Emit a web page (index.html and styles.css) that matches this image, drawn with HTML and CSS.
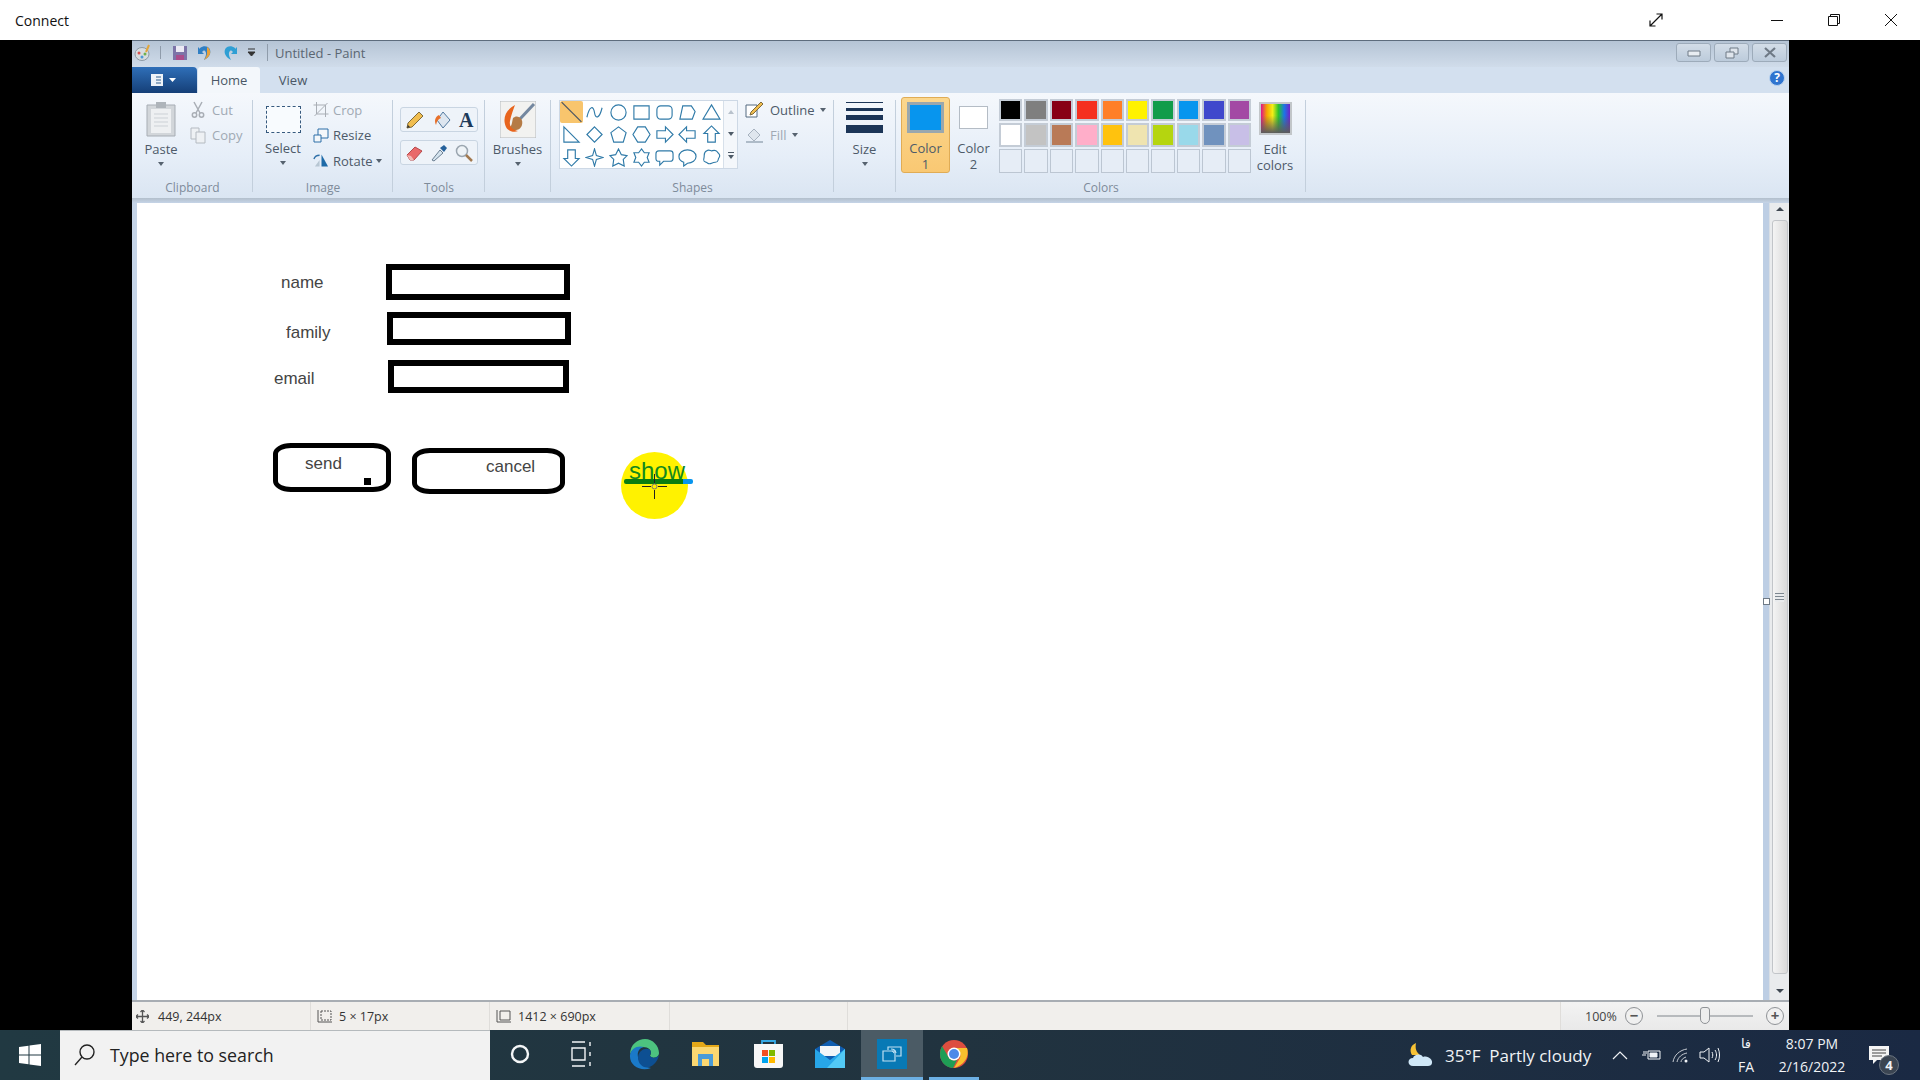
FILE: index.html
```html
<!DOCTYPE html>
<html lang="en">
<head>
<meta charset="UTF-8">
<meta name="viewport" content="width=device-width, initial-scale=1.0">
<title>Connect</title>
<link rel="stylesheet" href="styles.css">
</head>
<body>
<div class="connect-bar">
  <span class="connect-title">Connect</span>
  <svg class="connect-expand" width="16" height="16" viewBox="0 0 16 16" fill="none" stroke="#111" stroke-width="1.2"><path d="M2 14 14 2M8.5 2H14V7.5M2 8.5V14H7.5"/></svg>
  <svg class="connect-btn" width="14" height="14" viewBox="0 0 14 14" fill="none" stroke="#111"><path d="M1 7.5H13"/></svg>
  <svg class="connect-btn" width="14" height="14" viewBox="0 0 14 14" fill="none" stroke="#111"><path d="M1.5 3.5H10.5V12.5H1.5ZM3.5 3.5V1.5H12.5V10.5H10.5"/></svg>
  <svg class="connect-btn" width="14" height="14" viewBox="0 0 14 14" fill="none" stroke="#111"><path d="M1 1 13 13M13 1 1 13"/></svg>
</div>

<div class="stage">
  <div class="paint">
    <div class="title-row">
      <svg class="qa-icon first" width="18" height="18" viewBox="0 0 18 18"><ellipse cx="8" cy="10" rx="7" ry="6.5" fill="#d8dde0" stroke="#8d9aa5"/><circle cx="5" cy="9" r="1.5" fill="#d9534f"/><circle cx="8" cy="13" r="1.5" fill="#4c9ad6"/><circle cx="11" cy="10" r="1.5" fill="#6fb04f"/><path d="M12 8 15 1" stroke="#e2a63a" stroke-width="2"/></svg>
      <span class="qa-sep"></span>
      <svg class="qa-icon" width="16" height="16" viewBox="0 0 16 16"><path d="M1 1H15V15H1Z" fill="#7d74a8"/><path d="M4 1H12V7H4Z" fill="#eceaf4"/><path d="M4 10H12V15H4Z" fill="#ab4d8c"/></svg>
      <svg class="qa-icon" width="16" height="17" viewBox="0 0 16 17" fill="none"><path d="M3 4C8 0 15 3 13 10 12 13 9 15 7 16 9 12 10 9 8 7 7 6 6 7 5 8L7 10H1V3L3 5" fill="#2f7fc4"/><path d="M10 3C12 4 14 7 13 10 12 13 9 15 7 16 9 13 10 11 10 9Z" fill="#e9a13b"/></svg>
      <svg class="qa-icon" width="16" height="17" viewBox="0 0 16 17" fill="none"><path d="M13 4C8 0 1 3 3 10 4 13 7 15 9 16 7 12 6 9 8 7 9 6 10 7 11 8L9 10H15V3L13 5" fill="#2f9fd4"/></svg>
      <svg class="qa-icon" width="9" height="9" viewBox="0 0 9 9"><path d="M1 1H8M1 4H8L4.5 8Z" stroke="#333" fill="#333"/></svg>
      <span class="qa-sep tall"></span>
      <span class="window-title">Untitled - Paint</span>
      <div class="win-buttons">
        <div class="win-button"><svg width="14" height="8" viewBox="0 0 14 8"><path d="M1 2H13V7H1Z" fill="#e8edf2" stroke="#6f7a86"/></svg></div>
        <div class="win-button"><svg width="14" height="12" viewBox="0 0 14 12" fill="#dfe5ec" stroke="#6f7a86"><path d="M5 1H13V7H5Z"/><path d="M1 5H9V11H1Z"/></svg></div>
        <div class="win-button"><svg width="14" height="11" viewBox="0 0 14 11" fill="none" stroke="#6f7a86" stroke-width="2.2"><path d="M2 1 12 10M12 1 2 10"/></svg></div>
      </div>
    </div>

    <div class="tab-row">
      <div class="app-menu">
        <svg width="14" height="12" viewBox="0 0 14 12"><path d="M1 0H13V12H1Z" fill="#eef3f8"/><path d="M6 3H11M6 6H11M6 9H11" stroke="#32618f"/></svg>
        <svg width="7" height="4" viewBox="0 0 7 4"><path d="M0 0H7L3.5 4Z" fill="#fff"/></svg>
      </div>
      <div class="tab active">Home</div>
      <div class="tab">View</div>
      <svg class="help" width="16" height="16" viewBox="0 0 16 16"><circle cx="8" cy="8" r="7.5" fill="#2f74cf" stroke="#b9d2ef"/><text x="8" y="12" text-anchor="middle" class="help-mark">?</text></svg>
    </div>

    <div class="ribbon">
      <section class="group clipboard">
        <div class="group-body">
          <div class="big-btn paste">
            <svg width="30" height="36" viewBox="0 0 30 36"><path d="M1 4H29V35H1Z" fill="#d2d6da" stroke="#a7adb4"/><path d="M5 8H25V32H5Z" fill="#eef0f2"/><path d="M10 1H20V7H10Z" fill="#aeb4ba"/><path d="M8 13H22M8 17H22M8 21H22M8 25H22" stroke="#ccd1d6"/></svg>
            <span>Paste</span><i class="caret"></i>
          </div>
          <div class="small-col">
            <div class="small-btn dim"><svg width="16" height="17" viewBox="0 0 14 17" fill="none" stroke="#a9aeb5" stroke-width="1.5"><path d="M3 1 9 12M11 1 5 12"/><circle cx="3.5" cy="14" r="2.2"/><circle cx="10.5" cy="14" r="2.2"/></svg><span>Cut</span></div>
            <div class="small-btn dim"><svg width="16" height="17" viewBox="0 0 16 17" fill="#eef1f4" stroke="#b4bac1"><path d="M1 1H9V12H1Z"/><path d="M6 5H15V16H6Z"/></svg><span>Copy</span></div>
          </div>
        </div>
        <div class="group-label">Clipboard</div>
      </section>

      <section class="group image">
        <div class="group-body">
          <div class="big-btn select">
            <div class="select-box"></div>
            <span>Select</span><i class="caret"></i>
          </div>
          <div class="small-col">
            <div class="small-btn dim"><svg width="16" height="15" viewBox="0 0 15 15" fill="none" stroke="#a9aeb5"><path d="M3 0V12H15M0 3H12V15M1 14 14 1"/></svg><span>Crop</span></div>
            <div class="small-btn"><svg width="16" height="15" viewBox="0 0 16 15" fill="#f4f7fa" stroke="#2d6fa8"><path d="M5 1H15V10H5Z"/><path d="M1 7H8V14H1Z"/></svg><span>Resize</span></div>
            <div class="small-btn"><svg width="16" height="15" viewBox="0 0 17 15"><path d="M9 14V1L16 14Z" fill="#1d6aa8"/><path d="M7 14V7L2 14Z" fill="#b7c6d3"/><path d="M1 6C2 3 4 2 7 2" stroke="#2d6fa8" fill="none" stroke-width="1.5"/></svg><span>Rotate</span><i class="caret inline"></i></div>
          </div>
        </div>
        <div class="group-label">Image</div>
      </section>

      <section class="group tools">
        <div class="group-body">
          <div class="tool-grid">
            <div class="tool-row">
              <svg width="20" height="20" viewBox="0 0 20 20"><path d="M14 2 18 6 7 17 2 18 3 13Z" fill="#f0bd4f" stroke="#7d6a3b"/><path d="M2 18 3 15 5 17Z" fill="#333"/></svg>
              <svg width="20" height="20" viewBox="0 0 20 20"><path d="M11 2 18 10 11 18 5 10Z" fill="#dde6f0" stroke="#52799f"/><path d="M7 5C3 7 2 11 4 15 5 11 6 9 9 8Z" fill="#e8702a"/></svg>
              <span class="tool-a">A</span>
            </div>
            <div class="tool-row">
              <svg width="20" height="20" viewBox="0 0 20 20"><path d="M3 12 11 4 18 8 10 17H6Z" fill="#e9696a" stroke="#b64a4c"/><path d="M3 12 6 17H10L7 13Z" fill="#f4b9b4"/></svg>
              <svg width="20" height="20" viewBox="0 0 20 20"><path d="M3 17 11 7 14 10 5 18Z" fill="#d5e4ef" stroke="#6b7f92"/><path d="M11 5 15 2 18 5 15 9Z" fill="#25619b"/></svg>
              <svg width="20" height="20" viewBox="0 0 20 20" fill="none"><circle cx="8" cy="8" r="5.5" stroke="#9ba6b0" stroke-width="1.5" fill="#eef3f7"/><path d="M12 12 18 18" stroke="#a2794f" stroke-width="2.5"/></svg>
            </div>
          </div>
        </div>
        <div class="group-label">Tools</div>
      </section>

      <section class="group brushes">
        <div class="group-body">
          <div class="big-btn brush">
            <svg width="36" height="37" viewBox="0 0 36 37"><path d="M0 0H36V37H0Z" fill="#f2f2f0" stroke="#b4b9bd"/><path d="M34 3 19 19" stroke="#7488a0" stroke-width="3"/><path d="M13 17C17 13 24 17 22 24 20 31 11 30 9 26 12 26 12 21 13 17Z" fill="#b57b45"/><path d="M15 4C6 9 2 17 6 26 8 30 14 32 18 30 12 29 9 25 10 20 11 15 13 9 15 4Z" fill="#e8651d"/></svg>
            <span>Brushes</span><i class="caret"></i>
          </div>
        </div>
        <div class="group-label">&nbsp;</div>
      </section>

      <section class="group shapes">
        <div class="group-body">
          <div class="gallery">
            <div class="gallery-grid">
              <svg class="picked" viewBox="0 0 20 20"><path d="M1 1 19 19"/></svg>
              <svg viewBox="0 0 20 20"><path d="M2 15C5 2 9 3 10 10S15 17 18 5"/></svg>
              <svg viewBox="0 0 20 20"><circle cx="10" cy="10" r="8"/></svg>
              <svg viewBox="0 0 20 20"><path d="M2 3H18V17H2Z"/></svg>
              <svg viewBox="0 0 20 20"><rect x="2" y="3" width="16" height="14" rx="4"/></svg>
              <svg viewBox="0 0 20 20"><path d="M2 17 5 3H14L18 9 15 17Z"/></svg>
              <svg viewBox="0 0 20 20"><path d="M10 2 19 17H1Z"/></svg>
              <svg viewBox="0 0 20 20"><path d="M2 2 18 18H2Z"/></svg>
              <svg viewBox="0 0 20 20"><path d="M10 2 18 10 10 18 2 10Z"/></svg>
              <svg viewBox="0 0 20 20"><path d="M10 2 18 8 15 18H5L2 8Z"/></svg>
              <svg viewBox="0 0 20 20"><path d="M6 2H14L19 10 14 18H6L1 10Z"/></svg>
              <svg viewBox="0 0 20 20"><path d="M2 6H11V2L19 10 11 18V14H2Z"/></svg>
              <svg viewBox="0 0 20 20"><path d="M18 6H9V2L1 10 9 18V14H18Z"/></svg>
              <svg viewBox="0 0 20 20"><path d="M6 18V9H2L10 1 18 9H14V18Z"/></svg>
              <svg viewBox="0 0 20 20"><path d="M6 2V11H2L10 19 18 11H14V2Z"/></svg>
              <svg viewBox="0 0 20 20"><path d="M10 1 12 8 19 10 12 12 10 19 8 12 1 10 8 8Z"/></svg>
              <svg viewBox="0 0 20 20"><path d="M10 1 13 7 19 8 15 12 16 19 10 16 4 19 5 12 1 8 7 7Z"/></svg>
              <svg viewBox="0 0 20 20"><path d="M10 1 13 5H18L16 10 18 15H13L10 19 7 15H2L4 10 2 5H7Z"/></svg>
              <svg viewBox="0 0 20 20"><path d="M4 3H16Q19 3 19 6V11Q19 14 16 14H9L5 18V14H4Q1 14 1 11V6Q1 3 4 3Z"/></svg>
              <svg viewBox="0 0 20 20"><path d="M10 2C15 2 19 5 19 9S15 16 10 16L6 19V15C3 14 1 12 1 9 1 5 5 2 10 2Z"/></svg>
              <svg viewBox="0 0 20 20"><path d="M5 3C7 1 9 3 10 3S14 1 16 4 20 7 18 10 18 15 14 15 9 18 6 16 1 15 2 11 1 5 5 3Z"/></svg>
            </div>
            <div class="gallery-arrows">
              <i class="arrow-up"></i><i class="arrow-down"></i><i class="arrow-more"></i>
            </div>
          </div>
          <div class="small-col shape-opts">
            <div class="small-btn"><svg width="19" height="17" viewBox="0 0 19 17"><path d="M1 4H12V16H1Z" fill="#fff" stroke="#556b80"/><path d="M16 1 18 3 8 13 5 14 6 11Z" fill="#f0bd4f" stroke="#7d6a3b"/></svg><span>Outline</span><i class="caret inline"></i></div>
            <div class="small-btn dim"><svg width="19" height="17" viewBox="0 0 19 17"><path d="M9 2 15 8 9 14 3 8Z" fill="#dfe6ee" stroke="#a7b2bf"/><path d="M1 15H18" stroke="#aebbc8" stroke-width="2"/></svg><span>Fill</span><i class="caret inline"></i></div>
          </div>
        </div>
        <div class="group-label">Shapes</div>
      </section>

      <section class="group size">
        <div class="group-body">
          <div class="big-btn size-btn">
            <div class="size-lines"><i></i><i></i><i></i><i></i></div>
            <span>Size</span><i class="caret"></i>
          </div>
        </div>
        <div class="group-label">&nbsp;</div>
      </section>

      <section class="group colors">
        <div class="group-body">
          <div class="color-pick active"><div class="color-well"><b class="well-blue"></b></div><span>Color<br>1</span></div>
          <div class="color-pick second"><div class="color-well small"><b></b></div><span>Color<br>2</span></div>
          <div class="palette">
            <i class="c-black"></i><i class="c-gray"></i><i class="c-maroon"></i><i class="c-red"></i><i class="c-orange"></i><i class="c-yellow"></i><i class="c-green"></i><i class="c-blue"></i><i class="c-indigo"></i><i class="c-purple"></i>
            <i class="c-white"></i><i class="c-silver"></i><i class="c-brown"></i><i class="c-pink"></i><i class="c-gold"></i><i class="c-cream"></i><i class="c-lime"></i><i class="c-sky"></i><i class="c-steel"></i><i class="c-lilac"></i>
            <i class="c-empty"></i><i class="c-empty"></i><i class="c-empty"></i><i class="c-empty"></i><i class="c-empty"></i><i class="c-empty"></i><i class="c-empty"></i><i class="c-empty"></i><i class="c-empty"></i><i class="c-empty"></i>
          </div>
          <div class="edit-colors"><div class="rainbow"></div><span>Edit<br>colors</span></div>
        </div>
        <div class="group-label">Colors</div>
      </section>
    </div>
    <div class="ribbon-edge"></div>

    <div class="workspace">
      <div class="canvas">
        <div class="field field-name"></div>
        <div class="field field-family"></div>
        <div class="field field-email"></div>
        <div class="pill pill-send"></div>
        <div class="pill pill-cancel"></div>
        <div class="dot"></div>
        <div class="sun"></div>
        <span class="label l-name">name</span>
        <span class="label l-family">family</span>
        <span class="label l-email">email</span>
        <span class="label l-send">send</span>
        <span class="label l-cancel">cancel</span>
        <span class="show">show</span>
        <div class="underline"></div>
        <svg class="cross" width="25" height="25" viewBox="0 0 25 25" fill="none" stroke="#222"><path d="M0 12.5H9M16 12.5H25M12.5 0V9M12.5 16V25"/><circle cx="12.5" cy="12.5" r="2.5" stroke="#777"/></svg>
      </div>
      <div class="gutter"><div class="handle"></div></div>
      <div class="vscroll">
        <i class="scroll-up"></i>
        <div class="scroll-thumb"><div class="grip"></div></div>
        <i class="scroll-down"></i>
      </div>
    </div>

    <div class="statusbar">
      <div class="status-cell w-pos"><svg width="13" height="13" viewBox="0 0 13 13" fill="none" stroke="#555" stroke-width="1.3"><path d="M6.5 0V13M0 6.5H13"/><path d="M4.5 2 6.5 0 8.5 2M4.5 11 6.5 13 8.5 11M2 4.5 0 6.5 2 8.5M11 4.5 13 6.5 11 8.5"/></svg><span>449, 244px</span></div>
      <div class="status-cell w-sel"><svg width="16" height="15" viewBox="0 0 16 15" fill="none" stroke="#555"><path d="M4 2H14V11H4Z" stroke-dasharray="2 1"/><path d="M1 1V13H15"/></svg><span>5 × 17px</span></div>
      <div class="status-cell w-size"><svg width="16" height="15" viewBox="0 0 16 15" fill="none" stroke="#555"><path d="M4 2H14V11H4Z"/><path d="M1 1V13H15"/></svg><span>1412 × 690px</span></div>
      <div class="status-cell w-a"></div>
      <div class="status-cell w-b"></div>
      <div class="zoom-box">
        <span class="zoom-val">100%</span>
        <div class="zoom-round">−</div>
        <div class="zoom-track"><div class="zoom-thumb"></div></div>
        <div class="zoom-round">+</div>
      </div>
    </div>
  </div>
</div>

<div class="taskbar">
  <div class="start">
    <svg width="22" height="22" viewBox="0 0 22 22" fill="#fff"><path d="M0 3 9.5 1.7V10.5H0ZM10.5 1.5 22 0V10.5H10.5ZM0 11.5H9.5V20.3L0 19ZM10.5 11.5H22V22L10.5 20.5Z"/></svg>
  </div>
  <div class="searchbox">
    <svg width="24" height="24" viewBox="0 0 24 24" fill="none" stroke="#222" stroke-width="1.4"><circle cx="14" cy="9" r="7"/><path d="M9 14 2 22"/></svg>
    <span>Type here to search</span>
  </div>
  <div class="task-icons">
    <div class="task-slot"><svg width="20" height="20" viewBox="0 0 20 20" fill="none" stroke="#f4f6f7" stroke-width="2.4"><circle cx="10" cy="10" r="8"/></svg></div>
    <div class="task-slot"><svg width="22" height="26" viewBox="0 0 22 26" fill="none" stroke="#f4f6f7" stroke-width="1.4"><path d="M1 1H14M1 25H14M1 7H14V19H1ZM19 1V5M19 11V15M19 21V25"/></svg></div>
    <div class="task-slot"><svg width="32" height="32" viewBox="0 0 32 32"><path d="M2 17C2 6 10 1 17 1 25 1 31 8 31 15 31 20 24 21 22 18 25 12 20 9 15 9 8 9 3 12 2 17Z" fill="#4dc37f"/><path d="M2 17C3 10 10 7 16 9 11 10 9 14 10 19 11 25 16 29 23 30 13 34 1 28 2 17Z" fill="#1a79c8"/><path d="M10 19C11 12 18 9 22 12 24 15 21 18 22 18 25 21 29 20 31 17 29 26 22 31 16 29 12 27 10 24 10 19Z" fill="#0d4f92"/></svg></div>
    <div class="task-slot"><svg width="28" height="26" viewBox="0 0 28 26"><path d="M0 1H11L14 4H27V25H0Z" fill="#e5a818"/><path d="M0 6H27V25H0Z" fill="#fbd771"/><path d="M6 25V13H21V25H17V18H10V25Z" fill="#4a9bd8"/></svg></div>
    <div class="task-slot"><svg width="29" height="30" viewBox="0 0 29 30"><path d="M8 6V2H21V6" fill="none" stroke="#35a9e6" stroke-width="1.8"/><path d="M0 5H29V26Q29 29 26 29H3Q0 29 0 26Z" fill="#f7f7f7"/><path d="M8 11H14V17H8Z" fill="#f25022"/><path d="M15 11H21V17H15Z" fill="#7fba00"/><path d="M8 18H14V24H8Z" fill="#00a4ef"/><path d="M15 18H21V24H15Z" fill="#ffb900"/></svg></div>
    <div class="task-slot"><svg width="30" height="28" viewBox="0 0 30 28"><path d="M0 9 15 0 30 9V28H0Z" fill="#0f5db0"/><path d="M5 6H25V16H5Z" fill="#f1f5f8"/><path d="M0 9 15 20 30 9V28H0Z" fill="#27a6e8"/><path d="M30 9V28H12Z" fill="#52c9f5"/></svg></div>
    <div class="task-slot open current"><div class="rdp"><svg width="20" height="16" viewBox="0 0 20 16" fill="none" stroke="#bfe0f2" stroke-width="1.2"><path d="M6 4V1H19V10H14"/><path d="M1 5H13V15H1Z"/><path d="M9 3A5 5 0 0 1 14 7M10 5A3 3 0 0 1 12 7"/></svg></div></div>
    <div class="task-slot open"><svg width="28" height="28" viewBox="0 0 28 28"><circle cx="14" cy="14" r="14" fill="#dd4e3f"/><path d="M14 28C6 28 0 22 0 14 0 11 1 8 2 6L9 18C11 20 13 21 17 20L13 28Z" fill="#1f9d55"/><path d="M14 8H27C29 14 27 24 14 28L20 18C21 14 20 10 14 8Z" fill="#f9c02d"/><circle cx="14" cy="14" r="6.5" fill="#fff"/><circle cx="14" cy="14" r="5" fill="#4e89e8"/></svg></div>
  </div>
  <div class="tray">
    <svg class="weather" width="28" height="26" viewBox="0 0 28 26"><path d="M10 1C5 3 3 8 6 13H14C10 10 9 6 10 1Z" fill="#f7c235"/><path d="M7 24C1 24 1 16 7 16 8 12 15 11 17 15 22 13 27 18 26 21 26 23 24 24 22 24Z" fill="#cfe7f7"/></svg>
    <span class="weather-text">35°F&nbsp; Partly cloudy</span>
    <svg class="tray-icon chevron" width="16" height="9" viewBox="0 0 16 9" fill="none" stroke="#f0f3f6" stroke-width="1.2"><path d="M1 8 8 1 15 8"/></svg>
    <svg class="tray-icon" width="20" height="14" viewBox="0 0 20 14" fill="none" stroke="#f0f3f6"><path d="M6 3H18V11H6Z"/><path d="M8 5H15V9H8Z" fill="#f0f3f6"/><path d="M0 7H4M2 3V6M4 3V6"/></svg>
    <svg class="tray-icon" width="17" height="15" viewBox="0 0 17 15" fill="none" stroke="#c7ccd2"><path d="M1 14C2 7 8 2 15 1M5 14C6 9 10 6 15 5M9 14C9 12 11 10 14 9"/><circle cx="14" cy="13" r="1.5" fill="#f0f3f6" stroke="none"/></svg>
    <svg class="tray-icon" width="21" height="16" viewBox="0 0 21 16" fill="none" stroke="#f0f3f6"><path d="M1 5H5L10 1V15L5 11H1Z"/><path d="M13 5C14 7 14 9 13 11M16 3C18 6 18 10 16 13M19 1C21 5 21 11 19 15"/></svg>
    <div class="lang"><span class="lang-ar">فا</span><span>FA</span></div>
    <div class="clock"><span>8:07 PM</span><span>2/16/2022</span></div>
    <div class="notify">
      <svg width="20" height="18" viewBox="0 0 20 18"><path d="M0 0H20V14H8L4 18V14H0Z" fill="#f4f4f4"/><path d="M3 4H17M3 7H17M3 10H13" stroke="#444"/></svg>
      <span class="badge">4</span>
    </div>
  </div>
</div>
</body>
</html>
```

FILE: styles.css
```css
/* page frame */
body {
  margin: 0;
  width: 1920px;
  height: 1080px;
  overflow: hidden;
  display: flex;
  flex-direction: column;
  background-color: #000;
  font-family: 'Open Sans', 'Liberation Sans', sans-serif;
  color: #4d5a69;
}

.connect-bar {
  height: 40px;
  background-color: #fff;
  display: flex;
  align-items: center;
  color: #111;
}

.connect-title {
  margin-left: 15px;
  font-size: 14px;
  flex: 1;
}

.connect-expand {
  margin-right: 106px;
}

.connect-btn {
  margin-right: 43px;
}

.connect-btn:last-child {
  margin-right: 22px;
}

.stage {
  height: 990px;
  padding-left: 132px;
}

/* paint window */
.paint {
  width: 1657px;
  height: 990px;
  display: flex;
  flex-direction: column;
}

.title-row {
  height: 27px;
  box-sizing: border-box;
  display: flex;
  align-items: center;
  padding-bottom: 3px;
  background-image: linear-gradient(to bottom, #b5c4d5, #d0dcea);
  border-top: 1px solid #5d6c7d;
}

.qa-icon {
  margin-left: 9px;
}

.qa-icon.first {
  margin-left: 2px;
}

.qa-sep {
  width: 1px;
  height: 13px;
  margin-left: 8px;
  margin-right: 2px;
  background-color: #8f9cab;
}

.qa-sep.tall {
  height: 17px;
  margin-left: 11px;
  margin-right: 7px;
}

.window-title {
  font-size: 13px;
  color: #5a6672;
  flex: 1;
}

.win-buttons {
  display: flex;
  gap: 3px;
  margin-right: 2px;
  align-self: flex-start;
  margin-top: 2px;
}

.win-button {
  width: 35px;
  height: 19px;
  box-sizing: border-box;
  border: 1px solid #9dabba;
  border-radius: 3px;
  display: flex;
  justify-content: center;
  align-items: center;
  background-image: linear-gradient(to bottom, #d3dde8, #bccbdb);
}

.tab-row {
  height: 26px;
  display: flex;
  background-color: #d3e0ef;
  position: relative;
}

.app-menu {
  width: 65px;
  box-sizing: border-box;
  padding-right: 4px;
  display: flex;
  justify-content: center;
  align-items: center;
  gap: 5px;
  border-radius: 0 4px 0 0;
  background-image: linear-gradient(to bottom, #2f6fb8, #153f77);
}

.tab {
  width: 62px;
  font-size: 13px;
  line-height: 26px;
  text-align: center;
  color: #4a5766;
}

.tab.active {
  background-color: #f3f7fb;
  border-radius: 3px 3px 0 0;
  margin-left: 1px;
  margin-right: 2px;
}

.help {
  position: absolute;
  right: 4px;
  top: 3px;
}

.help-mark {
  font-size: 12px;
  font-weight: 700;
  fill: #fff;
}

/* ribbon */
.ribbon {
  height: 105px;
  display: flex;
  background-image: linear-gradient(to bottom, #f5f8fc, #e6eef8 60%, #dae5f2);
  font-size: 13px;
}

.ribbon-edge {
  height: 5px;
  background-image: linear-gradient(to bottom, #b3bfcc, #c5d4e7);
}

.group {
  box-sizing: border-box;
  display: flex;
  flex-direction: column;
  position: relative;
}

.group::after {
  content: '';
  position: absolute;
  right: 0;
  top: 7px;
  bottom: 6px;
  width: 1px;
  background-color: #c3cfdc;
}

.group-body {
  flex: 1;
  display: flex;
}

.group-label {
  height: 21px;
  line-height: 21px;
  font-size: 12px;
  text-align: center;
  color: #7e8b9a;
}

.clipboard { width: 121px; }
.image { width: 140px; }
.tools { width: 92px; }
.brushes { width: 66px; }
.shapes { width: 283px; }
.size { width: 62px; }
.colors { width: 410px; }

.big-btn {
  display: flex;
  flex-direction: column;
  align-items: center;
  line-height: 18px;
}

.big-btn span {
  margin-top: 3px;
}

.caret {
  display: block;
  width: 0;
  height: 0;
  margin-top: 4px;
  border-left: 3px solid transparent;
  border-right: 3px solid transparent;
  border-top: 4px solid #56626f;
}

.caret.inline {
  margin-top: 0;
  margin-left: -1px;
}

.small-col {
  display: flex;
  flex-direction: column;
  gap: 6.5px;
  padding-top: 7px;
}

.small-btn {
  height: 19px;
  display: flex;
  align-items: center;
  gap: 6px;
  white-space: nowrap;
}

.small-btn svg {
  flex: none;
}

.dim {
  color: #a0a9b3;
}

.paste {
  width: 58px;
  padding-top: 8px;
}

.select {
  width: 56px;
  margin-left: 2px;
  padding-top: 13px;
}

.select-box {
  width: 35px;
  height: 27px;
  box-sizing: border-box;
  border: 1px dashed #36597e;
  background-color: #f8fbfe;
}

.big-btn.select span {
  margin-top: 6px;
}

.image .small-col {
  margin-left: 2px;
}

.image .small-btn {
  gap: 4px;
}

.tool-grid {
  display: flex;
  flex-direction: column;
  gap: 8px;
  padding: 14px 0 0 7px;
}

.tool-row {
  width: 78px;
  height: 25px;
  box-sizing: border-box;
  border: 1px solid #c9d5e2;
  border-radius: 3px;
  display: flex;
  justify-content: space-around;
  align-items: center;
  background-color: #eef3f9;
}

.tool-a {
  font-family: 'Liberation Serif', serif;
  font-weight: 700;
  font-size: 20px;
  line-height: 20px;
  color: #1d3a5a;
}

.brush {
  width: 65px;
  padding-top: 8px;
}

.big-btn.brush span {
  margin-top: 2px;
}

/* shapes gallery */
.gallery {
  width: 179px;
  height: 69px;
  margin: 7px 0 0 8px;
  display: flex;
  box-sizing: border-box;
  border: 1px solid #cdd8e5;
  background-color: #f4f7fb;
}

.gallery-grid {
  width: 163px;
  display: grid;
  grid-template-columns: repeat(7, 23.3px);
  grid-template-rows: repeat(3, 22.3px);
  background-color: #fff;
}

.gallery-grid svg {
  width: 19px;
  height: 19px;
  margin: 2px;
  fill: none;
  stroke: #2f7aa8;
  stroke-width: 1.2;
}

.gallery-grid svg.picked {
  width: 23px;
  height: 22px;
  margin: 0;
  background-color: #f8c56d;
  stroke: #4d5763;
  border-radius: 2px;
}

.gallery-arrows {
  flex: 1;
  display: flex;
  flex-direction: column;
  align-items: center;
  justify-content: space-around;
  border-left: 1px solid #d7e0ea;
}

.arrow-up {
  border-left: 3px solid transparent;
  border-right: 3px solid transparent;
  border-bottom: 4px solid #b9c2cc;
}

.arrow-down {
  border-left: 3px solid transparent;
  border-right: 3px solid transparent;
  border-top: 4px solid #4f5b68;
}

.arrow-more {
  border-left: 3px solid transparent;
  border-right: 3px solid transparent;
  border-top: 4px solid #4f5b68;
  position: relative;
}

.arrow-more::before {
  content: '';
  position: absolute;
  left: -3px;
  top: -7px;
  width: 6px;
  height: 1px;
  background-color: #4f5b68;
}

.shape-opts {
  margin-left: 7px;
}

/* line size */
.size-btn {
  width: 61px;
  padding-top: 9px;
}

.size-lines {
  width: 37px;
  height: 31px;
  display: flex;
  flex-direction: column;
  justify-content: space-between;
  margin-bottom: 4px;
}

.size-lines i {
  display: block;
  background-color: #1c3557;
}

.size-lines i:nth-child(1) { height: 1px; }
.size-lines i:nth-child(2) { height: 3px; }
.size-lines i:nth-child(3) { height: 5px; }
.size-lines i:nth-child(4) { height: 8px; }

/* colors */
.colors .group-body {
  padding: 4px 0 0 5px;
}

.color-pick {
  width: 49px;
  height: 76px;
  box-sizing: border-box;
  margin-right: 1px;
  border: 1px solid transparent;
  border-radius: 3px;
  display: flex;
  flex-direction: column;
  align-items: center;
  padding-top: 4px;
  line-height: 16px;
  text-align: center;
}

.color-pick.active {
  background-image: linear-gradient(to bottom, #fbd78e, #f9c873);
  border-color: #e0ac55;
}

.color-pick.second {
  width: 45px;
  margin-right: 0;
}

.color-well {
  width: 37px;
  height: 36px;
  box-sizing: border-box;
  padding: 3px;
  background-color: #9aa7ad;
  margin-bottom: 7px;
}

.color-well.small {
  width: 29px;
  height: 28px;
  margin: 4px 0 11px;
  padding: 1px;
  background-color: #b4bcc5;
}

.color-well b {
  display: block;
  height: 100%;
  background-color: #fff;
}

.color-well b.well-blue {
  background-color: #0795ee;
}

.palette {
  display: grid;
  grid-template-columns: repeat(10, 23.4px);
  grid-template-rows: 22px 24px 24px;
  gap: 2px;
  width: 252px;
  height: 74px;
  margin-left: 3px;
  margin-top: 2px;
}

.palette i {
  display: block;
  box-sizing: border-box;
  border: 2px solid #c4ccd6;
}

.c-black { background-color: #000; }
.c-gray { background-color: #7f7f7f; }
.c-maroon { background-color: #880015; }
.c-red { background-color: #f5301f; }
.c-orange { background-color: #ff7f27; }
.c-yellow { background-color: #fff200; }
.c-green { background-color: #119c4a; }
.c-blue { background-color: #0795ee; }
.c-indigo { background-color: #3f48cc; }
.c-purple { background-color: #a349a4; }
.c-white { background-color: #fff; }
.c-silver { background-color: #c3c3c3; }
.c-brown { background-color: #b97a57; }
.c-pink { background-color: #ffaec9; }
.c-gold { background-color: #ffc20e; }
.c-cream { background-color: #efe4b0; }
.c-lime { background-color: #b5d50f; }
.c-sky { background-color: #99d9ea; }
.c-steel { background-color: #7092be; }
.c-lilac { background-color: #c8bfe7; }
.c-empty { background-color: #e6edf6; }

.palette i.c-empty {
  border-width: 1px;
  border-color: #bcc6d2;
}

.edit-colors {
  width: 46px;
  margin-left: 1px;
  display: flex;
  flex-direction: column;
  align-items: center;
  padding-top: 5px;
  line-height: 16px;
  text-align: center;
}

.rainbow {
  width: 33px;
  height: 33px;
  box-sizing: border-box;
  border: 2px solid #c2c6c9;
  margin-bottom: 6px;
  background-image: linear-gradient(to bottom, transparent 40%, #5c5c5c), linear-gradient(to right, #e0128c, #f5a300, #f4ee16, #2cc22c, #1b76e6, #6f22c9);
}

/* drawing area */
.workspace {
  flex: 1;
  min-height: 0;
  display: flex;
  background-color: #c5d4e7;
  padding-left: 5px;
}

.canvas {
  width: 1626px;
  height: 100%;
  background-color: #fff;
  position: relative;
}

.field {
  position: absolute;
  box-sizing: border-box;
  border: 6px solid #000;
}

.field-name { left: 249px; top: 61px; width: 184px; height: 36px; }
.field-family { left: 250px; top: 109px; width: 184px; height: 33px; }
.field-email { left: 251px; top: 157px; width: 181px; height: 33px; }

.pill {
  position: absolute;
  box-sizing: border-box;
  border: 5px solid #000;
  border-radius: 18px / 11px;
}

.pill-send { left: 136px; top: 240px; width: 118px; height: 49px; }
.pill-cancel { left: 275px; top: 245px; width: 153px; height: 46px; }

.dot {
  position: absolute;
  left: 227px;
  top: 275px;
  width: 7px;
  height: 7px;
  background-color: #000;
}

.sun {
  position: absolute;
  left: 484px;
  top: 249px;
  width: 67px;
  height: 67px;
  border-radius: 50%;
  background-color: #fff200;
}

.label {
  position: absolute;
  font-family: 'Liberation Sans', sans-serif;
  font-size: 17px;
  line-height: 20px;
  color: #444;
}

.l-name { left: 144px; top: 70px; }
.l-family { left: 149px; top: 120px; }
.l-email { left: 137px; top: 166px; }
.l-send { left: 168px; top: 251px; }
.l-cancel { left: 349px; top: 254px; }

.show {
  position: absolute;
  left: 492px;
  top: 254px;
  font-family: 'Liberation Sans', sans-serif;
  font-size: 24px;
  line-height: 28px;
  color: #12891e;
}

.underline {
  position: absolute;
  left: 487px;
  top: 276px;
  width: 69px;
  height: 5px;
  border-radius: 2px;
  background-image: linear-gradient(to right, #0a7d10 86%, #0795ee 86%);
}

.cross {
  position: absolute;
  left: 505px;
  top: 271px;
}

.gutter {
  width: 6px;
  position: relative;
  background-color: #bdcee4;
}

.handle {
  position: absolute;
  left: 0;
  top: 395px;
  width: 5px;
  height: 5px;
  background-color: #fff;
  border: 1px solid #6f7a86;
}

.vscroll {
  width: 20px;
  display: flex;
  flex-direction: column;
  align-items: center;
  background-color: #e9ebed;
  border-left: 1px solid #d8dee5;
  box-sizing: border-box;
}

.scroll-up {
  margin: 4px 0 9px;
  border-left: 4px solid transparent;
  border-right: 4px solid transparent;
  border-bottom: 4px solid #3d4650;
}

.scroll-down {
  margin: 15px 0 7px;
  border-left: 4px solid transparent;
  border-right: 4px solid transparent;
  border-top: 4px solid #3d4650;
}

.scroll-thumb {
  flex: 1;
  width: 16px;
  box-sizing: border-box;
  border: 1px solid #c2c5c9;
  border-radius: 3px;
  display: flex;
  align-items: center;
  justify-content: center;
  background-image: linear-gradient(to right, #f4f4f4, #d9d9d9);
}

.grip {
  width: 9px;
  height: 9px;
  background-image: repeating-linear-gradient(to bottom, #7d8790 0, #7d8790 1px, #e9ebed 1px, #e9ebed 3px);
}

/* status bar */
.statusbar {
  height: 30px;
  box-sizing: border-box;
  display: flex;
  align-items: stretch;
  background-color: #f1efec;
  border-top: 2px solid #a8adb3;
  font-size: 12.5px;
  color: #333;
}

.status-cell {
  box-sizing: border-box;
  display: flex;
  align-items: center;
  gap: 6px;
  padding-left: 6px;
  border-right: 1px solid #dfddda;
}

.w-pos { width: 179px; gap: 9px; padding-left: 4px; }
.w-sel { width: 179px; }
.w-size { width: 180px; }
.w-a { width: 178px; }
.w-b { width: 713px; }

.zoom-box {
  flex: 1;
  display: flex;
  align-items: center;
  background-image: linear-gradient(to bottom, #f3f3f3, #e9e9e9);
}

.zoom-val {
  margin-left: 24px;
  width: 40px;
  color: #444;
}

.zoom-round {
  width: 18px;
  height: 18px;
  box-sizing: border-box;
  border: 1px solid #8f9296;
  border-radius: 50%;
  font-size: 15px;
  font-weight: 700;
  line-height: 15px;
  text-align: center;
  background-color: #f0f0f0;
  color: #555;
}

.zoom-track {
  width: 96px;
  height: 2px;
  margin: 0 13px 0 14px;
  position: relative;
  background-color: #b7babd;
}

.zoom-thumb {
  position: absolute;
  left: 43px;
  top: -8px;
  width: 10px;
  height: 17px;
  box-sizing: border-box;
  border: 1px solid #8f9296;
  border-radius: 3px 3px 5px 5px;
  background-color: #ededed;
}

/* taskbar */
.taskbar {
  height: 50px;
  display: flex;
  background-image: linear-gradient(to right, #213942, #21333f 50%, #1a2943);
  color: #f0f3f6;
}

.start {
  flex: none;
  width: 60px;
  display: flex;
  justify-content: center;
  align-items: center;
}

.searchbox {
  flex: none;
  width: 430px;
  box-sizing: border-box;
  display: flex;
  align-items: center;
  gap: 13px;
  padding-left: 13px;
  padding-bottom: 2px;
  background-color: #f2f2f2;
  border-top: 1px solid #b5babd;
  font-size: 17.8px;
  color: #222;
}

.task-icons {
  flex: none;
  display: flex;
  margin-left: -1px;
}

.task-slot {
  width: 62px;
  height: 50px;
  box-sizing: border-box;
  display: flex;
  justify-content: center;
  align-items: center;
  border-bottom: 3px solid transparent;
}

.task-slot.open {
  border-bottom-color: #6cb0e4;
}

.task-slot.current {
  background-color: #4b5b65;
}

.task-slot.open + .task-slot.open {
  margin-left: 6px;
  width: 50px;
}

.rdp {
  width: 30px;
  height: 30px;
  display: flex;
  justify-content: center;
  align-items: center;
  background-color: #0879b5;
}

.tray {
  flex: none;
  display: flex;
  align-items: center;
}

.weather {
  flex: none;
  margin-left: 427px;
  margin-right: 11px;
}

.weather-text {
  font-size: 17px;
  white-space: nowrap;
  width: 167px;
}

.tray-icon {
  flex: none;
  margin-right: 10px;
}

.chevron {
  margin-right: 14px;
}

.lang {
  width: 32px;
  display: flex;
  flex-direction: column;
  align-items: center;
  font-size: 14px;
  line-height: 23px;
}

.lang-ar {
  font-family: 'DejaVu Sans', sans-serif;
  font-size: 13px;
}

.clock {
  width: 90px;
  margin-left: 5px;
  display: flex;
  flex-direction: column;
  align-items: center;
  font-size: 14px;
  line-height: 23px;
}

.notify {
  position: relative;
  margin-left: 12px;
  width: 30px;
  height: 30px;
  display: flex;
  align-items: center;
}

.badge {
  position: absolute;
  left: 10px;
  top: 15px;
  width: 20px;
  height: 20px;
  border-radius: 50%;
  box-sizing: border-box;
  border: 1px solid #6c7580;
  background-color: #3b4552;
  font-size: 13px;
  font-weight: 700;
  line-height: 18px;
  text-align: center;
}
```
